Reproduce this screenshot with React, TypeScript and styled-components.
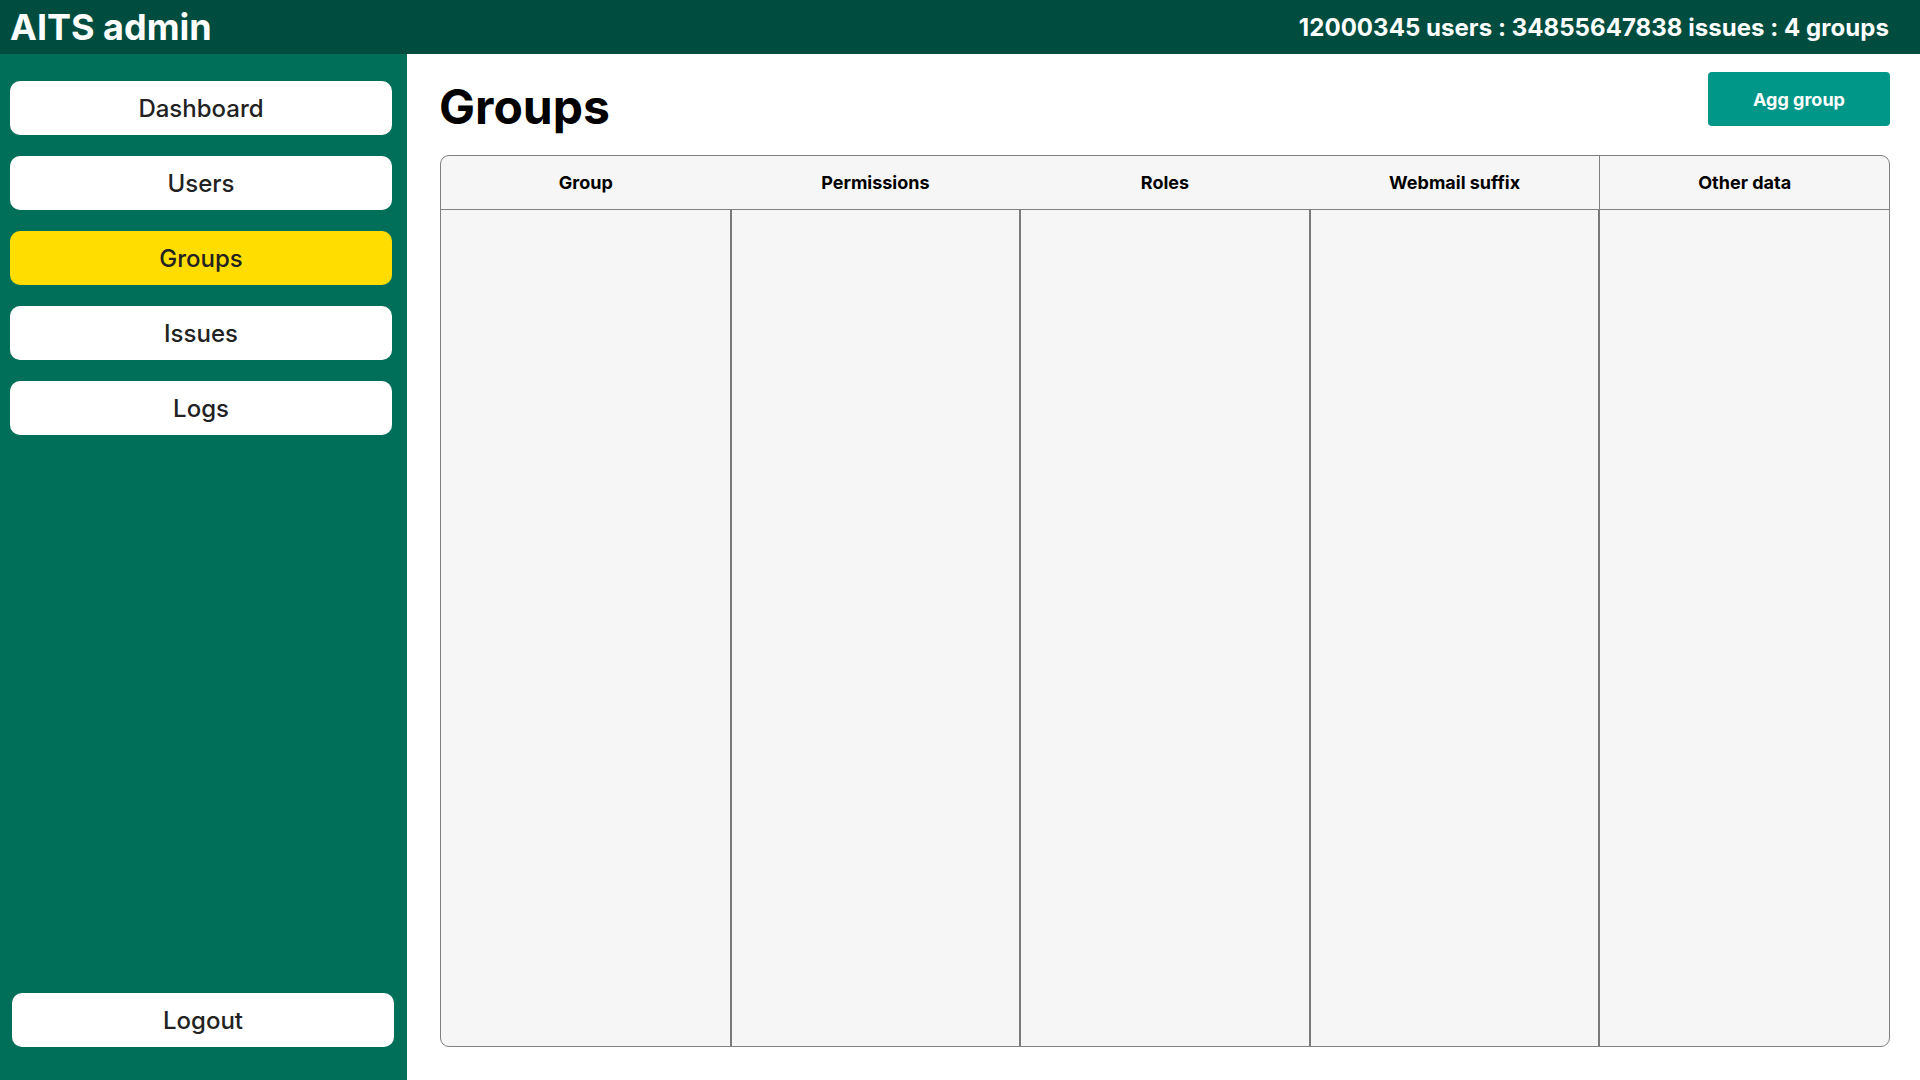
import React from "react";
import styled, { createGlobalStyle } from "styled-components";

const GlobalStyle = createGlobalStyle`
  * { box-sizing: border-box; }
  html, body { margin: 0; padding: 0; height: 100%; }
  body { font-family: Inter, "Noto Sans", sans-serif; background: #ffffff; }
  #root { height: 100%; }
`;

const Page = styled.div`
  display: flex;
  flex-direction: column;
  height: 100vh;
`;

const TopBar = styled.header`
  height: 54px;
  flex: 0 0 54px;
  background: #004d40;
  color: #ffffff;
  display: flex;
  align-items: center;
  justify-content: space-between;
  padding: 0 31px 0 10px;
`;

const Brand = styled.h1`
  margin: 0;
  font-size: 36px;
  font-weight: 700;
`;

const Stats = styled.div`
  font-size: 24px;
  font-weight: 700;
  letter-spacing: 0.05px;
`;

const Body = styled.div`
  flex: 1;
  display: flex;
  min-height: 0;
`;

const Sidebar = styled.nav`
  width: 407px;
  flex: 0 0 407px;
  background: #006f5a;
  display: flex;
  flex-direction: column;
  justify-content: space-between;
  padding: 27px 15px 33px 10px;
`;

const NavList = styled.div`
  display: flex;
  flex-direction: column;
  gap: 21px;
`;

const NavButton = styled.button<{ $active?: boolean; $shift?: number }>`
  height: 54px;
  width: 382px;
  margin-left: ${(p) => p.$shift ?? 0}px;
  border: none;
  border-radius: 10px;
  background: ${(p) => (p.$active ? "#ffdd00" : "#ffffff")};
  color: #222222;
  font-family: Inter, "Noto Sans", sans-serif;
  font-size: 24px;
  font-weight: 500;
  cursor: pointer;
`;

const Main = styled.main`
  flex: 1;
  display: flex;
  flex-direction: column;
  padding: 18px 30px 33px 33px;
  min-width: 0;
`;

const TopRow = styled.div`
  display: flex;
  justify-content: space-between;
  align-items: flex-start;
  margin-bottom: 24px;
`;

const Title = styled.h2`
  margin: 11px 0 0 -1px;
  font-size: 48px;
  line-height: 48px;
  font-weight: 700;
  color: #000000;
`;

const AddButton = styled.button`
  width: 182px;
  height: 54px;
  border: none;
  border-radius: 4px;
  background: #009688;
  color: #ffffff;
  font-family: Inter, "Noto Sans", sans-serif;
  font-size: 18px;
  font-weight: 700;
  cursor: pointer;
`;

const Table = styled.div`
  flex: 1;
  display: flex;
  flex-direction: column;
  border: 1px solid #808080;
  border-radius: 9px;
  background: #f6f6f6;
  overflow: hidden;
`;

const HeadRow = styled.div`
  display: grid;
  grid-template-columns: repeat(5, 1fr);
  height: 54px;
  flex: 0 0 54px;
  border-bottom: 1px solid #808080;
`;

const HeadCell = styled.div<{ $divider?: boolean }>`
  display: flex;
  align-items: center;
  justify-content: center;
  font-size: 18px;
  font-weight: 700;
  color: #000000;
  border-left: ${(p) => (p.$divider ? "1px solid #808080" : "none")};
`;

const BodyRow = styled.div`
  flex: 1;
  display: grid;
  grid-template-columns: repeat(5, 1fr);
`;

const BodyCell = styled.div<{ $first?: boolean; $last?: boolean }>`
  border-left: ${(p) => (p.$first ? "none" : "1px solid #7a7a7a")};
  border-right: ${(p) => (p.$last ? "none" : "1px solid #7a7a7a")};
`;

const navItems = ["Dashboard", "Users", "Groups", "Issues", "Logs"];
const columns = ["Group", "Permissions", "Roles", "Webmail suffix", "Other data"];

export default function App() {
  return (
    <Page>
      <GlobalStyle />
      <TopBar>
        <Brand>AITS admin</Brand>
        <Stats>12000345 users : 34855647838 issues : 4 groups</Stats>
      </TopBar>
      <Body>
        <Sidebar>
          <NavList>
            {navItems.map((item) => (
              <NavButton key={item} $active={item === "Groups"}>
                {item}
              </NavButton>
            ))}
          </NavList>
          <NavButton $shift={2}>Logout</NavButton>
        </Sidebar>
        <Main>
          <TopRow>
            <Title>Groups</Title>
            <AddButton>Agg group</AddButton>
          </TopRow>
          <Table>
            <HeadRow>
              {columns.map((c, i) => (
                <HeadCell key={c} $divider={i === 4}>
                  {c}
                </HeadCell>
              ))}
            </HeadRow>
            <BodyRow>
              {columns.map((c, i) => (
                <BodyCell key={c} $first={i === 0} $last={i === columns.length - 1} />
              ))}
            </BodyRow>
          </Table>
        </Main>
      </Body>
    </Page>
  );
}
